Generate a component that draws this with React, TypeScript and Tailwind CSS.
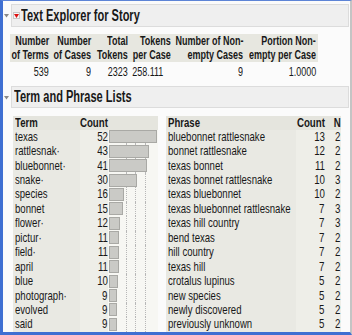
import React from "react";

const terms: [string, number][] = [
  ["texas", 52],
  ["rattlesnak·", 43],
  ["bluebonnet·", 41],
  ["snake·", 30],
  ["species", 16],
  ["bonnet", 15],
  ["flower·", 12],
  ["pictur·", 11],
  ["field·", 11],
  ["april", 11],
  ["blue", 10],
  ["photograph·", 9],
  ["evolved", 9],
  ["said", 9],
];

const phrases: [string, number, number][] = [
  ["bluebonnet rattlesnake", 13, 2],
  ["bonnet rattlesnake", 12, 2],
  ["texas bonnet", 11, 2],
  ["texas bonnet rattlesnake", 10, 3],
  ["texas bluebonnet", 10, 2],
  ["texas bluebonnet rattlesnake", 7, 3],
  ["texas hill country", 7, 3],
  ["bend texas", 7, 2],
  ["hill country", 7, 2],
  ["texas hill", 7, 2],
  ["crotalus lupinus", 5, 2],
  ["new species", 5, 2],
  ["newly discovered", 5, 2],
  ["previously unknown", 5, 2],
];

const font = { fontFamily: '"Liberation Sans", Arial, sans-serif' };

function L({ children }: { children: React.ReactNode }) {
  return <span className="inline-block whitespace-nowrap origin-left scale-x-[0.71]">{children}</span>;
}
function R({ children }: { children: React.ReactNode }) {
  return <span className="inline-block whitespace-nowrap origin-right scale-x-[0.72]">{children}</span>;
}
function TitleText({ children }: { children: React.ReactNode }) {
  return <span className="inline-block whitespace-nowrap origin-left scale-x-[0.69]">{children}</span>;
}

function Disclosure() {
  return (
    <svg width="5" height="5" viewBox="0 0 5 5" className="shrink-0">
      <path d="M0 1 L5 1 L2.5 4.5 Z" fill="#8a8a8a" />
    </svg>
  );
}

function HeadCell({ w, a, b }: { w: string; a: string; b: string }) {
  return (
    <div className={`${w} flex flex-col items-end`}>
      <R>{a}</R>
      <R>{b}</R>
    </div>
  );
}

function Cell({ w, v }: { w: string; v: string }) {
  return (
    <div className={`${w} flex justify-end`}>
      <R>{v}</R>
    </div>
  );
}

export default function App() {
  return (
    <div
      className="w-[352px] h-[335px] overflow-hidden bg-[#fbfbfb] border-l-[3px] border-t border-b-[3px] border-r-2 border-l-[#3f6fd2] border-t-[#5d84d6] border-b-[#3f6fd2] border-r-[#c4c4c4] text-[#181818]"
      style={font}
    >
      {/* Title */}
      <div className="flex items-center mt-[3px]">
        <div className="w-[5px] ml-px"><Disclosure /></div>
        <div className="flex-1 h-[23px] ml-[2px] mr-px flex items-center bg-[#efefef] border border-[#dcdcdc]">
          <div className="w-[7px] h-[7px] ml-px flex items-center justify-center bg-[#f7f7f7] border border-[#c8c8c8]">
            <svg width="5" height="4" viewBox="0 0 5 4"><path d="M0 0 L5 0 L2.5 4 Z" fill="#d11" /></svg>
          </div>
          <span className="ml-px text-[16px] font-bold leading-none">
            <TitleText>Text Explorer for Story</TitleText>
          </span>
        </div>
      </div>

      {/* Stats table */}
      <div className="ml-[7px] mt-[7px]">
        <div className="flex bg-[#e7e7e0] w-[308px] pr-[2px] font-bold text-[12.5px] leading-[14px]">
          <HeadCell w="w-[39px]" a="Number" b="of Terms" />
          <HeadCell w="w-[42px]" a="Number" b="of Cases" />
          <HeadCell w="w-[37px]" a="Total" b="Tokens" />
          <HeadCell w="w-[43px]" a="Tokens" b="per Case" />
          <HeadCell w="w-[72px]" a="Number of Non-" b="empty Cases" />
          <HeadCell w="w-[73px]" a="Portion Non-" b="empty per Case" />
        </div>
        <div className="flex w-[308px] h-[19px] items-center text-[12.5px] leading-[14px]">
          <Cell w="w-[39px]" v="539" />
          <Cell w="w-[42px]" v="9" />
          <Cell w="w-[37px]" v="2323" />
          <Cell w="w-[43px] pr-[8px]" v="258.111" />
          <Cell w="w-[72px]" v="9" />
          <Cell w="w-[73px]" v="1.0000" />
        </div>
      </div>

      {/* Section header */}
      <div className="flex items-center mt-[5px]">
        <div className="w-[5px] ml-px"><Disclosure /></div>
        <div className="flex-1 h-[22px] ml-[2px] mr-px flex items-center bg-[#efefef] border border-[#dcdcdc]">
          <span className="ml-[2px] text-[16px] font-bold leading-none">
            <TitleText>Term and Phrase Lists</TitleText>
          </span>
        </div>
      </div>

      {/* Lists */}
      <div className="flex mt-[8px] ml-[10px] text-[13.5px] leading-[14px]">
        {/* Term table */}
        <div className="w-[145px]">
          <div className="flex h-[13.5px] items-center bg-[#e5e5de] font-bold">
            <div className="w-[67px] pl-[2px]"><L>Term</L></div>
            <div className="w-[28px] flex justify-end"><R>Count</R></div>
            <div className="flex-1" />
          </div>
          {terms.map(([t, c], i) => (
            <div key={i} className="flex h-[14.45px]">
              <div className="w-[67px] pl-[2px] bg-[#e9e9e3] flex items-center"><L>{t}</L></div>
              <div className="w-[28px] bg-[#eeeee8] flex items-center justify-end"><R>{c}</R></div>
              <div className="relative flex-1 bg-[#f7f7f3] flex items-center">
                <div className="absolute top-0 bottom-0 left-[18px] border-l border-dotted border-[#b8b8b8]" />
                <div className="absolute top-0 bottom-0 left-[27px] border-l border-dotted border-[#b8b8b8]" />
                <div className="absolute top-0 bottom-0 left-[37px] border-l border-dotted border-[#b8b8b8]" />
                <div
                  className="relative h-[13px] ml-px bg-[#cacac6] border border-[#a9a9a5]"
                  style={{ width: Math.round(c * 0.92) }}
                />
              </div>
            </div>
          ))}
          <div className="flex h-[14.45px]">
            <div className="w-[67px] bg-[#e9e9e3]" />
            <div className="w-[28px] bg-[#eeeee8]" />
            <div className="flex-1 bg-[#f7f7f3] flex items-center">
              <div className="h-[13px] ml-px w-[7px] bg-[#cacac6] border border-[#a9a9a5]" />
            </div>
          </div>
        </div>

        {/* Phrase table */}
        <div className="w-[175px] ml-[8px]">
          <div className="flex h-[13.5px] items-center bg-[#e5e5de] font-bold">
            <div className="w-[130px] pl-[2px]"><L>Phrase</L></div>
            <div className="w-[29px] flex justify-end"><R>Count</R></div>
            <div className="w-[16px] flex justify-end"><R>N</R></div>
          </div>
          {phrases.map(([p, c, n], i) => (
            <div key={i} className="flex h-[14.45px]">
              <div className="w-[130px] pl-[2px] bg-[#e9e9e3] flex items-center"><L>{p}</L></div>
              <div className="w-[29px] bg-[#eeeee8] flex items-center justify-end"><R>{c}</R></div>
              <div className="w-[16px] bg-[#eeeee8] flex items-center justify-end"><R>{n}</R></div>
            </div>
          ))}
          <div className="flex h-[14.45px]">
            <div className="w-[130px] bg-[#e9e9e3]" />
            <div className="w-[29px] bg-[#eeeee8]" />
            <div className="w-[16px] bg-[#eeeee8]" />
          </div>
        </div>
      </div>
    </div>
  );
}
